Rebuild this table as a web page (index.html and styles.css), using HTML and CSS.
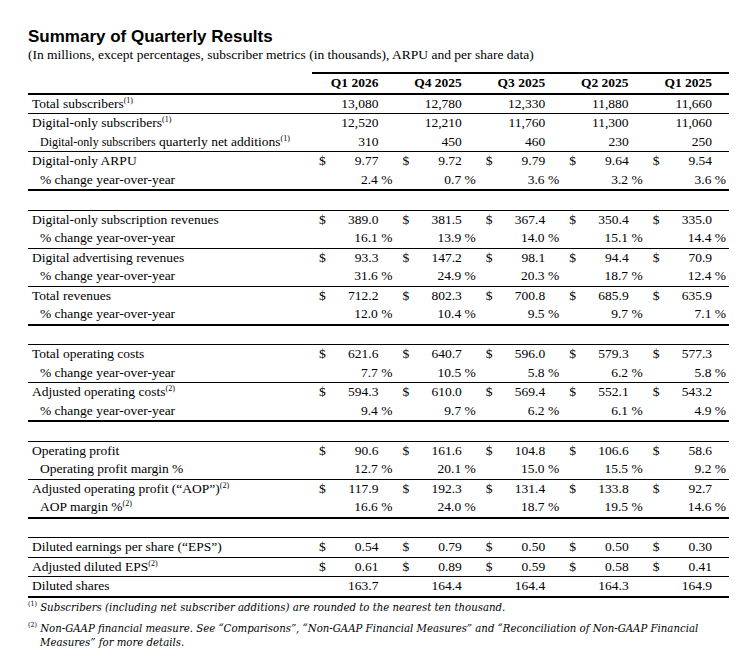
FILE: index.html
```html
<!DOCTYPE html>
<html lang="en">
<head>
    <meta charset="UTF-8">
    <meta name="viewport" content="width=device-width, initial-scale=1.0">
    <title>Summary of Quarterly Results</title>
    <link rel="stylesheet" href="styles.css">
</head>
<body>
    <header>
        <h1>Summary of Quarterly Results</h1>
        <p class="subtitle">(In millions, except percentages, subscriber metrics (in thousands), ARPU and per share data)</p>
    </header>

    <table class="results">
        <colgroup>
            <col class="c-label">
            <col class="c-cur"><col class="c-val">
            <col class="c-cur"><col class="c-val">
            <col class="c-cur"><col class="c-val">
            <col class="c-cur"><col class="c-val">
            <col class="c-cur"><col class="c-val">
        </colgroup>
        <thead>
            <tr class="end">
                <th class="lbl"></th>
                <th colspan="2">Q1 2026</th>
                <th colspan="2">Q4 2025</th>
                <th colspan="2">Q3 2025</th>
                <th colspan="2">Q2 2025</th>
                <th colspan="2">Q1 2025</th>
            </tr>
        </thead>
        <tbody>
            <tr class="line">
                <td class="lbl">Total subscribers<sup>(1)</sup></td>
                <td class="d"></td><td class="v">13,080</td>
                <td class="d"></td><td class="v">12,780</td>
                <td class="d"></td><td class="v">12,330</td>
                <td class="d"></td><td class="v">11,880</td>
                <td class="d"></td><td class="v">11,660</td>
            </tr>
            <tr>
                <td class="lbl">Digital-only subscribers<sup>(1)</sup></td>
                <td class="d"></td><td class="v">12,520</td>
                <td class="d"></td><td class="v">12,210</td>
                <td class="d"></td><td class="v">11,760</td>
                <td class="d"></td><td class="v">11,300</td>
                <td class="d"></td><td class="v">11,060</td>
            </tr>
            <tr class="line">
                <td class="lbl sub"><span class="small">Digital-only subscribers</span> quarterly net additions<sup>(1)</sup></td>
                <td class="d"></td><td class="v">310</td>
                <td class="d"></td><td class="v">450</td>
                <td class="d"></td><td class="v">460</td>
                <td class="d"></td><td class="v">230</td>
                <td class="d"></td><td class="v">250</td>
            </tr>
            <tr>
                <td class="lbl">Digital-only ARPU</td>
                <td class="d">$</td><td class="v">9.77</td>
                <td class="d">$</td><td class="v">9.72</td>
                <td class="d">$</td><td class="v">9.79</td>
                <td class="d">$</td><td class="v">9.64</td>
                <td class="d">$</td><td class="v">9.54</td>
            </tr>
            <tr class="end pct">
                <td class="lbl sub">% change year-over-year</td>
                <td class="d"></td><td class="v">2.4 %</td>
                <td class="d"></td><td class="v">0.7 %</td>
                <td class="d"></td><td class="v">3.6 %</td>
                <td class="d"></td><td class="v">3.2 %</td>
                <td class="d"></td><td class="v">3.6 %</td>
            </tr>
            <tr class="line blank"><td colspan="11"></td></tr>

            <tr>
                <td class="lbl">Digital-only subscription revenues</td>
                <td class="d">$</td><td class="v">389.0</td>
                <td class="d">$</td><td class="v">381.5</td>
                <td class="d">$</td><td class="v">367.4</td>
                <td class="d">$</td><td class="v">350.4</td>
                <td class="d">$</td><td class="v">335.0</td>
            </tr>
            <tr class="line pct">
                <td class="lbl sub">% change year-over-year</td>
                <td class="d"></td><td class="v">16.1 %</td>
                <td class="d"></td><td class="v">13.9 %</td>
                <td class="d"></td><td class="v">14.0 %</td>
                <td class="d"></td><td class="v">15.1 %</td>
                <td class="d"></td><td class="v">14.4 %</td>
            </tr>
            <tr>
                <td class="lbl">Digital advertising revenues</td>
                <td class="d">$</td><td class="v">93.3</td>
                <td class="d">$</td><td class="v">147.2</td>
                <td class="d">$</td><td class="v">98.1</td>
                <td class="d">$</td><td class="v">94.4</td>
                <td class="d">$</td><td class="v">70.9</td>
            </tr>
            <tr class="line pct">
                <td class="lbl sub">% change year-over-year</td>
                <td class="d"></td><td class="v">31.6 %</td>
                <td class="d"></td><td class="v">24.9 %</td>
                <td class="d"></td><td class="v">20.3 %</td>
                <td class="d"></td><td class="v">18.7 %</td>
                <td class="d"></td><td class="v">12.4 %</td>
            </tr>
            <tr>
                <td class="lbl">Total revenues</td>
                <td class="d">$</td><td class="v">712.2</td>
                <td class="d">$</td><td class="v">802.3</td>
                <td class="d">$</td><td class="v">700.8</td>
                <td class="d">$</td><td class="v">685.9</td>
                <td class="d">$</td><td class="v">635.9</td>
            </tr>
            <tr class="end pct">
                <td class="lbl sub">% change year-over-year</td>
                <td class="d"></td><td class="v">12.0 %</td>
                <td class="d"></td><td class="v">10.4 %</td>
                <td class="d"></td><td class="v">9.5 %</td>
                <td class="d"></td><td class="v">9.7 %</td>
                <td class="d"></td><td class="v">7.1 %</td>
            </tr>
            <tr class="line blank"><td colspan="11"></td></tr>

            <tr>
                <td class="lbl">Total operating costs</td>
                <td class="d">$</td><td class="v">621.6</td>
                <td class="d">$</td><td class="v">640.7</td>
                <td class="d">$</td><td class="v">596.0</td>
                <td class="d">$</td><td class="v">579.3</td>
                <td class="d">$</td><td class="v">577.3</td>
            </tr>
            <tr class="line pct">
                <td class="lbl sub">% change year-over-year</td>
                <td class="d"></td><td class="v">7.7 %</td>
                <td class="d"></td><td class="v">10.5 %</td>
                <td class="d"></td><td class="v">5.8 %</td>
                <td class="d"></td><td class="v">6.2 %</td>
                <td class="d"></td><td class="v">5.8 %</td>
            </tr>
            <tr>
                <td class="lbl">Adjusted operating costs<sup>(2)</sup></td>
                <td class="d">$</td><td class="v">594.3</td>
                <td class="d">$</td><td class="v">610.0</td>
                <td class="d">$</td><td class="v">569.4</td>
                <td class="d">$</td><td class="v">552.1</td>
                <td class="d">$</td><td class="v">543.2</td>
            </tr>
            <tr class="end pct">
                <td class="lbl sub">% change year-over-year</td>
                <td class="d"></td><td class="v">9.4 %</td>
                <td class="d"></td><td class="v">9.7 %</td>
                <td class="d"></td><td class="v">6.2 %</td>
                <td class="d"></td><td class="v">6.1 %</td>
                <td class="d"></td><td class="v">4.9 %</td>
            </tr>
            <tr class="line blank"><td colspan="11"></td></tr>

            <tr>
                <td class="lbl">Operating profit</td>
                <td class="d">$</td><td class="v">90.6</td>
                <td class="d">$</td><td class="v">161.6</td>
                <td class="d">$</td><td class="v">104.8</td>
                <td class="d">$</td><td class="v">106.6</td>
                <td class="d">$</td><td class="v">58.6</td>
            </tr>
            <tr class="line pct">
                <td class="lbl sub">Operating profit margin %</td>
                <td class="d"></td><td class="v">12.7 %</td>
                <td class="d"></td><td class="v">20.1 %</td>
                <td class="d"></td><td class="v">15.0 %</td>
                <td class="d"></td><td class="v">15.5 %</td>
                <td class="d"></td><td class="v">9.2 %</td>
            </tr>
            <tr>
                <td class="lbl">Adjusted operating profit (“AOP”)<sup>(2)</sup></td>
                <td class="d">$</td><td class="v">117.9</td>
                <td class="d">$</td><td class="v">192.3</td>
                <td class="d">$</td><td class="v">131.4</td>
                <td class="d">$</td><td class="v">133.8</td>
                <td class="d">$</td><td class="v">92.7</td>
            </tr>
            <tr class="end pct">
                <td class="lbl sub">AOP margin %<sup>(2)</sup></td>
                <td class="d"></td><td class="v">16.6 %</td>
                <td class="d"></td><td class="v">24.0 %</td>
                <td class="d"></td><td class="v">18.7 %</td>
                <td class="d"></td><td class="v">19.5 %</td>
                <td class="d"></td><td class="v">14.6 %</td>
            </tr>
            <tr class="line blank"><td colspan="11"></td></tr>

            <tr class="line">
                <td class="lbl">Diluted earnings per share (“EPS”)</td>
                <td class="d">$</td><td class="v">0.54</td>
                <td class="d">$</td><td class="v">0.79</td>
                <td class="d">$</td><td class="v">0.50</td>
                <td class="d">$</td><td class="v">0.50</td>
                <td class="d">$</td><td class="v">0.30</td>
            </tr>
            <tr class="line">
                <td class="lbl">Adjusted diluted EPS<sup>(2)</sup></td>
                <td class="d">$</td><td class="v">0.61</td>
                <td class="d">$</td><td class="v">0.89</td>
                <td class="d">$</td><td class="v">0.59</td>
                <td class="d">$</td><td class="v">0.58</td>
                <td class="d">$</td><td class="v">0.41</td>
            </tr>
            <tr class="end">
                <td class="lbl">Diluted shares</td>
                <td class="d"></td><td class="v">163.7</td>
                <td class="d"></td><td class="v">164.4</td>
                <td class="d"></td><td class="v">164.4</td>
                <td class="d"></td><td class="v">164.3</td>
                <td class="d"></td><td class="v">164.9</td>
            </tr>
        </tbody>
    </table>

    <div class="notes">
        <p><sup>(1)</sup> Subscribers (including net subscriber additions) are rounded to the nearest ten thousand.</p>
        <p><sup>(2)</sup> Non-GAAP financial measure. See “Comparisons”, “Non-GAAP Financial Measures” and “Reconciliation of Non-GAAP Financial Measures” for more details.</p>
    </div>
</body>
</html>
```

FILE: styles.css
```css
body {
    font-family: "Liberation Serif", "Times New Roman", serif;
    background-color: #ffffff;
    color: #000000;
    margin: 0;
    padding: 27px 0 0 28px;
}
header h1 {
    margin: 0;
    font-family: "Liberation Sans", Arial, sans-serif;
    font-size: 17px;
    font-weight: bold;
    line-height: 20px;
}
header .subtitle {
    margin: 0;
    font-size: 13.5px;
    line-height: 16px;
}
.results {
    margin-top: 9px;
    width: 701px;
    border-collapse: collapse;
    table-layout: fixed;
    font-size: 13.5px;
}
.c-label {
    width: 284px;
}
.c-cur {
    width: 28px;
}
.c-val {
    width: 55.4px;
}
.results th,
.results td {
    padding: 0;
    line-height: 18.5px;
    white-space: nowrap;
    vertical-align: bottom;
}
.results th {
    text-align: right;
    padding-right: 17px;
    border-top: 2px solid #000;
}
.results th.lbl {
    border-top: none;
}
.results tr.line {
    border-bottom: 1px solid #000;
}
.results tr.end {
    border-bottom: 2px solid #000;
}
.results tr.blank td {
    height: 18.5px;
}
.lbl {
    padding-left: 4px !important;
}
.lbl.sub {
    padding-left: 12px !important;
}
.small {
    font-size: 12px;
}
.d {
    padding-left: 7px !important;
}
.v {
    text-align: right;
    padding-right: 17px !important;
}
.pct .v {
    padding-right: 3px !important;
}
sup {
    font-size: 8px;
    line-height: 0;
    vertical-align: 5px;
}
.notes {
    margin-top: 3px;
    width: 700px;
    font-family: "DejaVu Serif Condensed", "DejaVu Serif", serif;
    font-stretch: condensed;
    font-style: italic;
    font-size: 11.3px;
    line-height: 14px;
}
.notes p {
    margin: 0 0 7px;
    padding-left: 12px;
    text-indent: -12px;
}
.notes sup {
    font-style: normal;
    font-size: 7px;
}
```
